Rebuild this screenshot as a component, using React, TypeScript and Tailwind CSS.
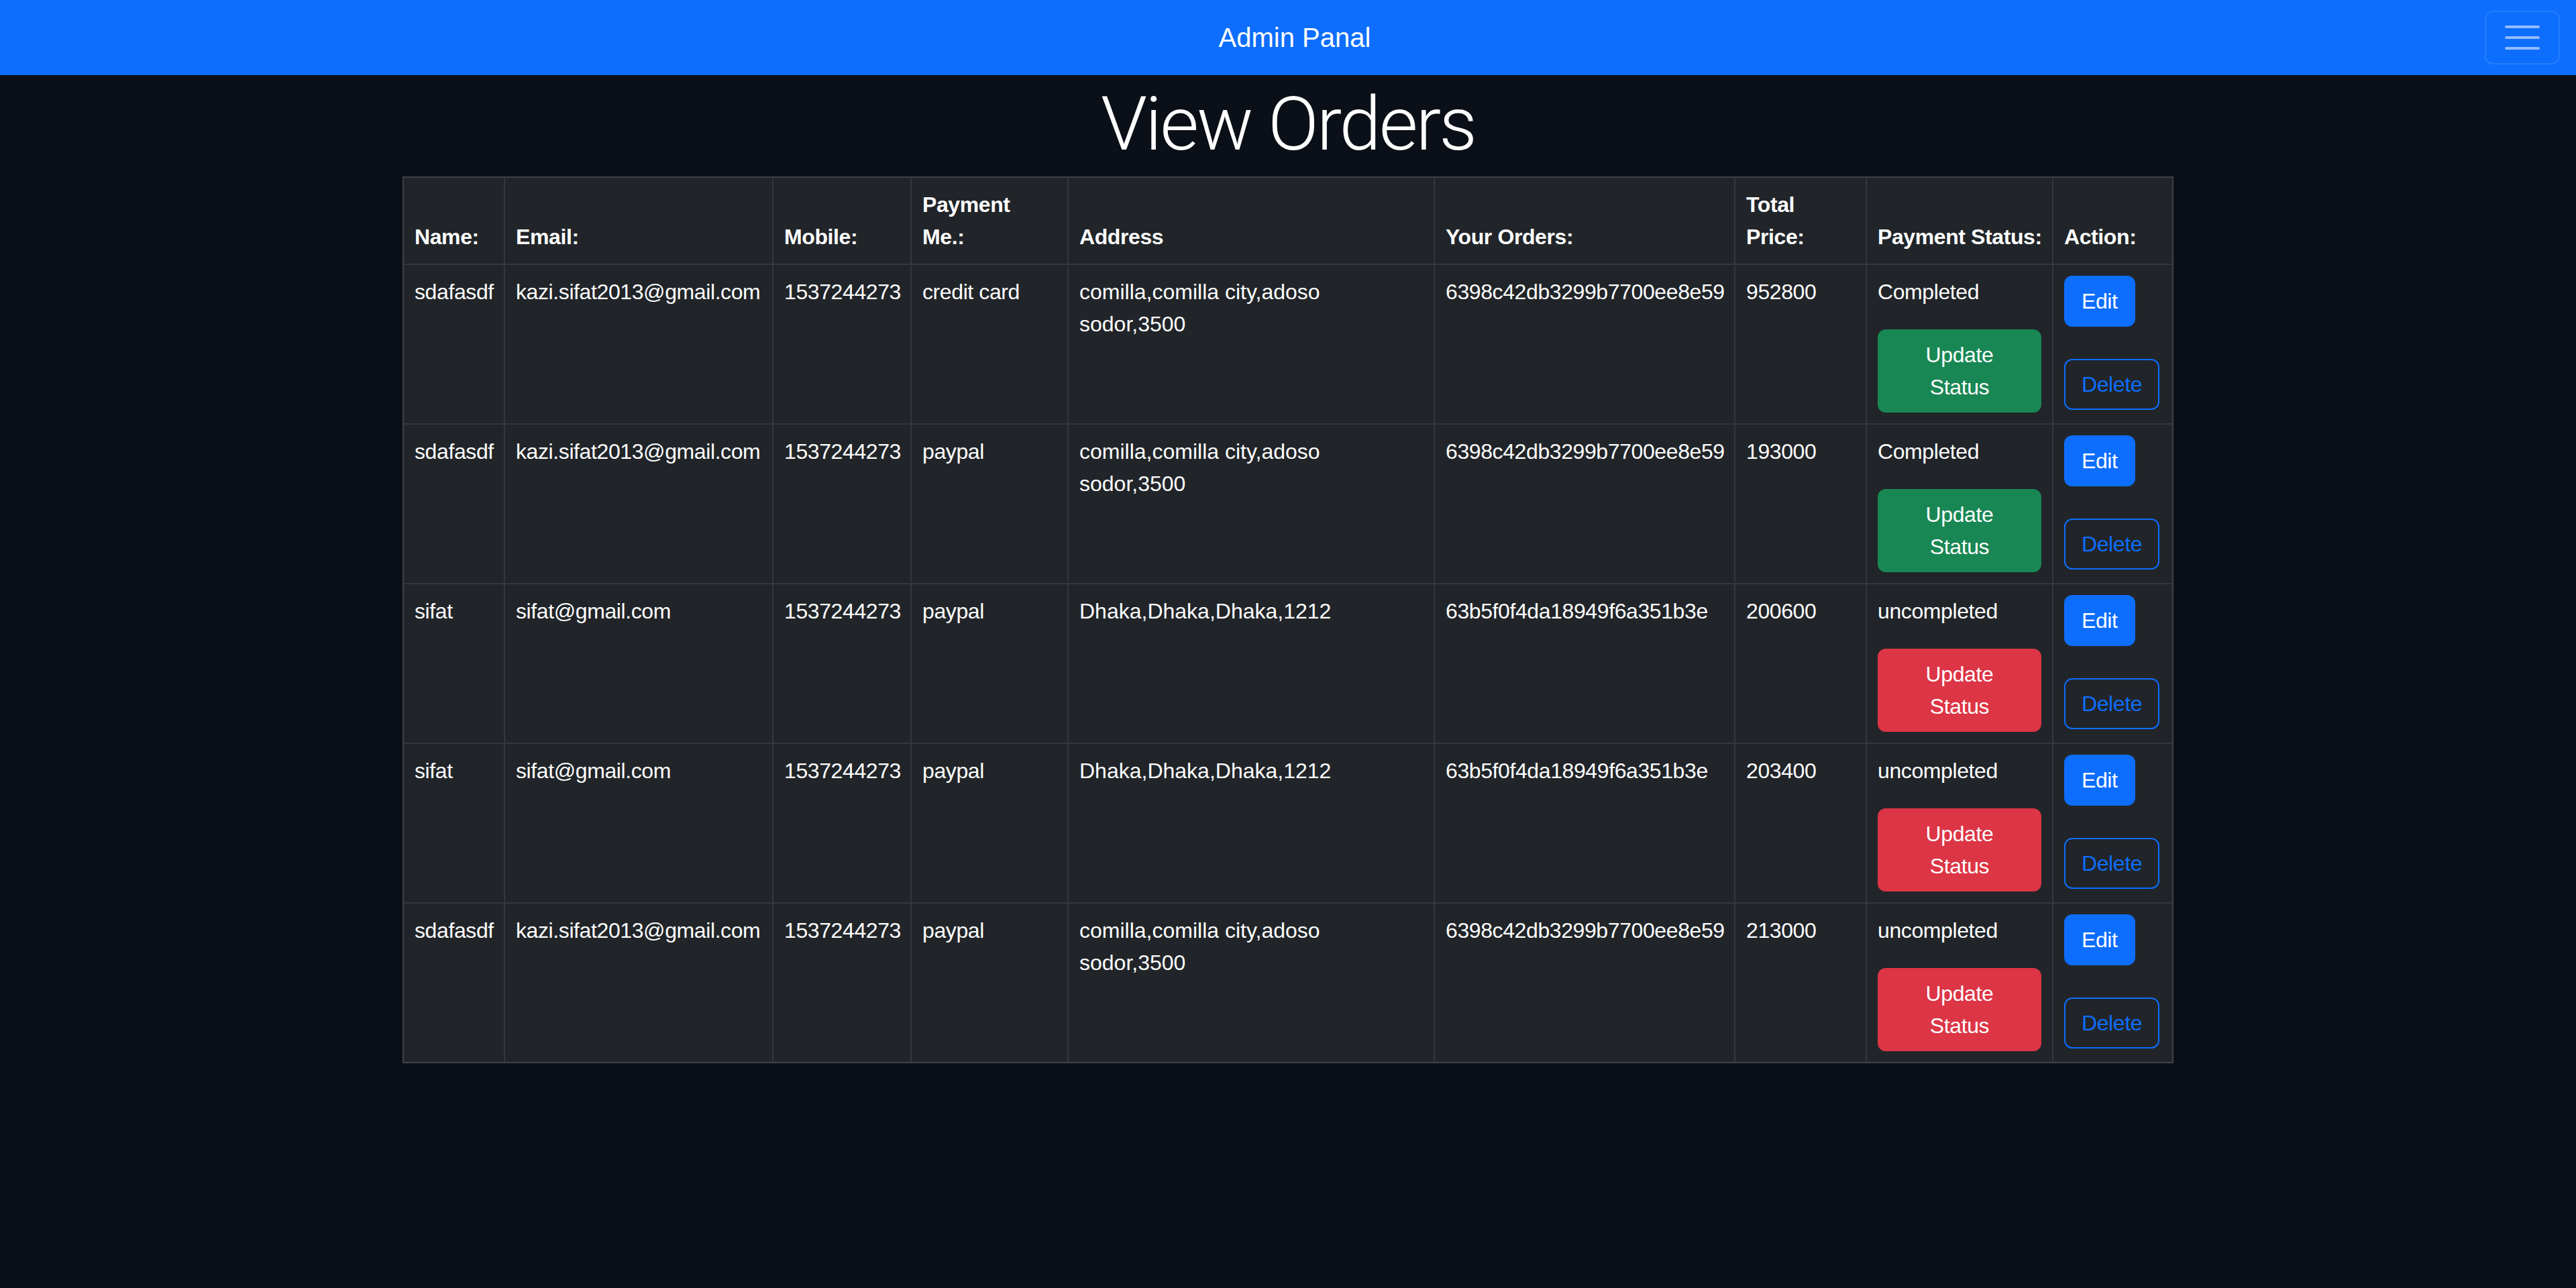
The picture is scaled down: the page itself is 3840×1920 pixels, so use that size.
type Order = {
    name: string
    email: string
    mobile: string
    method: string
    address: string
    orderId: string
    price: string
    status: "Completed" | "uncompleted"
}

const orders: Order[] = [
    { name: "sdafasdf", email: "kazi.sifat2013@gmail.com", mobile: "1537244273", method: "credit card", address: "comilla,comilla city,adoso sodor,3500", orderId: "6398c42db3299b7700ee8e59", price: "952800", status: "Completed" },
    { name: "sdafasdf", email: "kazi.sifat2013@gmail.com", mobile: "1537244273", method: "paypal", address: "comilla,comilla city,adoso sodor,3500", orderId: "6398c42db3299b7700ee8e59", price: "193000", status: "Completed" },
    { name: "sifat", email: "sifat@gmail.com", mobile: "1537244273", method: "paypal", address: "Dhaka,Dhaka,Dhaka,1212", orderId: "63b5f0f4da18949f6a351b3e", price: "200600", status: "uncompleted" },
    { name: "sifat", email: "sifat@gmail.com", mobile: "1537244273", method: "paypal", address: "Dhaka,Dhaka,Dhaka,1212", orderId: "63b5f0f4da18949f6a351b3e", price: "203400", status: "uncompleted" },
    { name: "sdafasdf", email: "kazi.sifat2013@gmail.com", mobile: "1537244273", method: "paypal", address: "comilla,comilla city,adoso sodor,3500", orderId: "6398c42db3299b7700ee8e59", price: "213000", status: "uncompleted" },
]

const colWidths = [151, 400, 206, 234, 546, 448, 196, 278, 177]

const th = "p-[16px] align-bottom text-left font-bold border-r-2 border-b-2 border-[#32383e] last:border-r-0"
const td = "p-[16px] align-top text-left font-normal border-r-2 border-b-2 border-[#32383e] last:border-r-0"

function Navbar() {
    return (
        <nav className="h-[112px] bg-[#0d6efd] flex items-center px-[24px]">
            <div className="flex-1" />
            <a href="#" className="ml-[20px] text-[40px] leading-[60px] text-white">Admin Panal</a>
            <div className="flex-1 flex justify-end">
                <button className="w-[112px] h-[80px] border-2 border-white/10 rounded-[12px] flex items-center justify-center">
                    <svg width="60" height="60" viewBox="0 0 60 60">
                        <path d="M6 14h48M6 30h48M6 46h48" stroke="rgba(255,255,255,0.55)" strokeWidth="4" strokeLinecap="round" />
                    </svg>
                </button>
            </div>
        </nav>
    )
}

function OrderRow({ order, last }: { order: Order; last: boolean }) {
    const statusBtn = order.status === "Completed"
        ? "bg-[#198754] border-[#198754]"
        : "bg-[#dc3545] border-[#dc3545]"
    const cell = last ? td.replace("border-b-2 ", "") : td

    return (
        <tr>
            <td className={cell}>{order.name}</td>
            <td className={cell}>{order.email}</td>
            <td className={cell}>{order.mobile}</td>
            <td className={cell}>{order.method}</td>
            <td className={cell + " tracking-normal"}>{order.address}</td>
            <td className={cell}>{order.orderId}</td>
            <td className={cell}>{order.price}</td>
            <td className={cell}>
                <p className="mb-[32px]">{order.status}</p>
                <button className={"block w-full border-2 rounded-[12px] px-[24px] py-[12px] text-center text-white " + statusBtn}>
                    Update Status
                </button>
            </td>
            <td className={cell}>
                <div className="flex flex-col items-start">
                    <button className="block border-2 border-[#0d6efd] bg-[#0d6efd] rounded-[12px] px-[24px] py-[12px] text-white">Edit</button>
                    <button className="block mt-[48px] border-2 border-[#0d6efd] rounded-[12px] px-[24px] py-[12px] text-[#0d6efd]">Delete</button>
                </div>
            </td>
        </tr>
    )
}

export default function App() {
    return (
        <div className="min-h-screen bg-[#0b0f17] text-white font-['Liberation_Sans',Arial,sans-serif] text-[32px] leading-[48px]">
            <Navbar />
            <h1 className="mt-[6px] mb-[11px] text-center text-[112px] leading-[134px] font-light tracking-[-3px] font-['Roboto',sans-serif]">
                View Orders
            </h1>
            <table className="mx-auto w-[2640px] table-fixed border-separate border-spacing-0 border-2 border-[#3d4247] bg-[#212529] tracking-[-0.4px]">
                <colgroup>
                    {colWidths.map((w, i) => <col key={i} style={{ width: w }} />)}
                </colgroup>
                <thead>
                    <tr>
                        <th className={th}>Name:</th>
                        <th className={th}>Email:</th>
                        <th className={th}>Mobile:</th>
                        <th className={th}>Payment<br />Me.:</th>
                        <th className={th}>Address</th>
                        <th className={th}>Your Orders:</th>
                        <th className={th}>Total<br />Price:</th>
                        <th className={th + " whitespace-nowrap"}>Payment Status:</th>
                        <th className={th}>Action:</th>
                    </tr>
                </thead>
                <tbody>
                    {orders.map((o, i) => <OrderRow key={i} order={o} last={i === orders.length - 1} />)}
                </tbody>
            </table>
        </div>
    )
}
